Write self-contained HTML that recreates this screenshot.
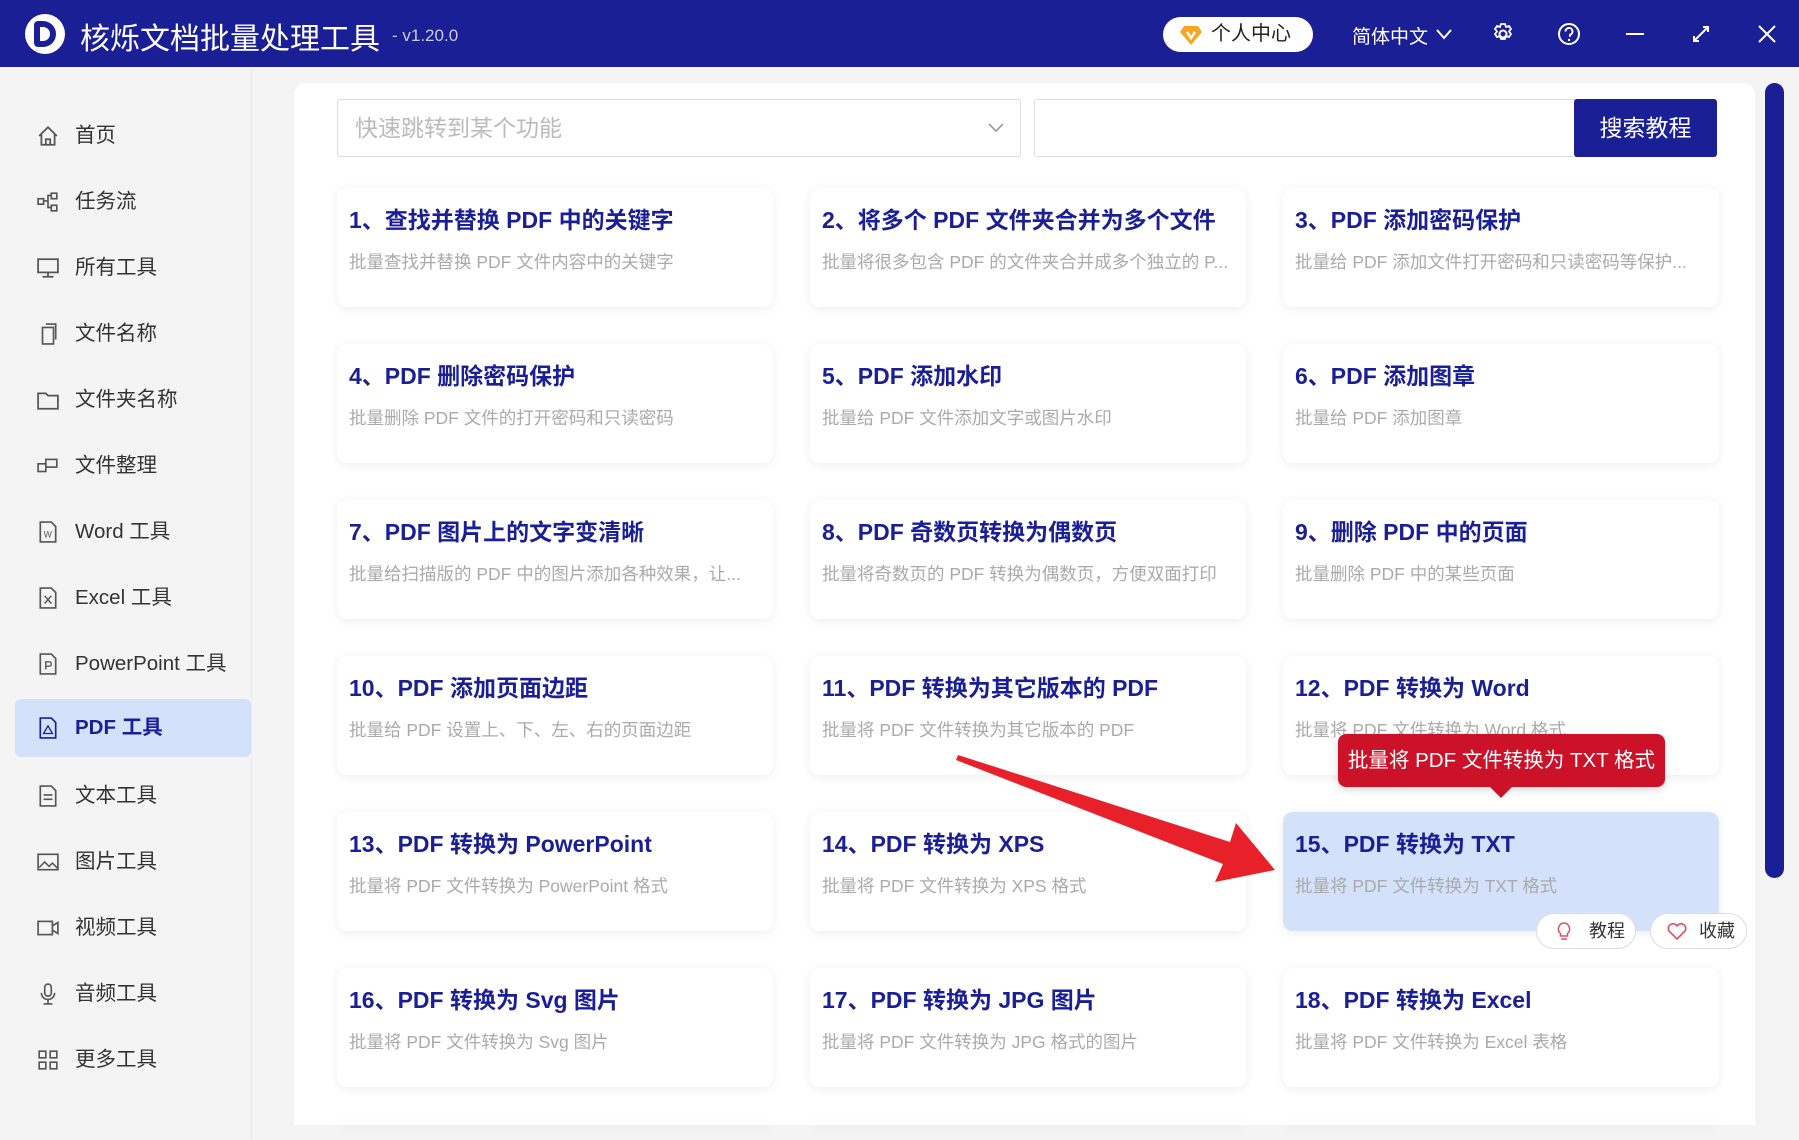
<!DOCTYPE html>
<html><head><meta charset="utf-8"><style>
*{margin:0;padding:0;box-sizing:border-box}
body{width:1799px;height:1140px;overflow:hidden;background:#f4f4f4;font-family:"Liberation Sans","Noto Sans CJK SC",sans-serif;position:relative}
.hdr{position:absolute;left:0;top:0;width:1799px;height:67px;background:#1a1f96;color:#fff}
.abs{position:absolute}
.side{position:absolute;left:0;top:67px;width:252px;height:1073px;background:#f4f4f4;border-right:1px solid #ececec}
.si{position:absolute;left:15px;width:236px;height:58px;font-size:20.5px;color:#333;line-height:58px;padding-left:60px;border-radius:6px}
.si svg{position:absolute;left:22px;top:18px}
.si.act{background:#d4e1fb;color:#1a1f96;font-weight:bold}
.panel{position:absolute;left:294px;top:83px;width:1461px;height:1042px;background:#fff;border-radius:12px 12px 0 0;overflow:hidden}
.card{position:absolute;width:436px;height:119px;background:#fff;border-radius:10px;box-shadow:0 2px 10px rgba(0,0,0,0.07)}
.card h3{position:absolute;left:12px;top:13px;font-size:23px;color:#1a1f96;font-weight:bold;white-space:nowrap}
.card p{position:absolute;left:12px;top:61px;font-size:17.5px;color:#aaa;white-space:nowrap}
.btn{position:absolute;height:36px;background:#fff;border:1px solid #ddd;border-radius:18px;font-size:18px;color:#333;line-height:34px}
</style></head><body>
<div class="hdr">
 <div class="abs" style="left:25px;top:14px;width:40px;height:40px;border-radius:50%;background:#fff;"></div>
 <div class="abs" style="left:34px;top:21px;width:22px;height:26px;border:6px solid #1a1f96;border-radius:4px 13px 13px 4px;"></div>
 <div class="abs" style="left:80px;top:14px;font-size:30px;">核烁文档批量处理工具</div>
 <div class="abs" style="left:392px;top:26px;font-size:17px;color:#ccd;">- v1.20.0</div>
 <div class="abs" style="left:1163px;top:17px;width:150px;height:35px;background:#fff;border-radius:18px;color:#222;font-size:20px;line-height:35px;padding-left:48px;">个人中心</div>
 <svg class="abs" style="left:1180px;top:25px" width="22" height="20" viewBox="0 0 22 20"><path d="M4 1h14l4 6-11 13L0 7z" fill="#f5a623"/><path d="M7 7l4 6 4-6" stroke="#fff" stroke-width="2.5" fill="none"/></svg>
 <div class="abs" style="left:1352px;top:22px;font-size:19px;">简体中文</div>
 <svg class="abs" style="left:1436px;top:28px" width="16" height="12"><path d="M1 2l7 8 7-8" stroke="#fff" stroke-width="2" fill="none"/></svg>
 <svg class="abs" style="left:1491px;top:22px" width="24" height="24" viewBox="0 0 24 24"><circle cx="12" cy="12" r="3.5" stroke="#fff" stroke-width="2" fill="none"/><path d="M10 2h4l1 3 3-1 2 3-2 2.5 2 2.5-2 3-3-1-1 3h-4l-1-3-3 1-2-3 2-2.5-2-2.5 2-3 3 1z" stroke="#fff" stroke-width="1.8" fill="none"/></svg>
 <svg class="abs" style="left:1557px;top:22px" width="24" height="24"><circle cx="12" cy="12" r="10" stroke="#fff" stroke-width="2" fill="none"/><path d="M8.5 9.5a3.5 3.5 0 1 1 4.5 3.3v2" stroke="#fff" stroke-width="2" fill="none"/><circle cx="12" cy="18" r="1.2" fill="#fff"/></svg>
 <div class="abs" style="left:1626px;top:33px;width:18px;height:2px;background:#fff"></div>
 <svg class="abs" style="left:1692px;top:25px" width="18" height="18"><path d="M2 16L16 2M11 2h5v5M2 11v5h5" stroke="#fff" stroke-width="2" fill="none"/></svg>
 <svg class="abs" style="left:1758px;top:25px" width="18" height="18"><path d="M1 1l16 16M17 1L1 17" stroke="#fff" stroke-width="2"/></svg>
</div>
<div class="side">
</div>
<div class="abs" style="left:0;top:69px;width:252px;">
 <div class="si" style="top:38px"><svg width="22" height="22" viewBox="0 0 20 20"><path d="M2 10L10 2l8 8M4 8v10h12V8M8 18v-5h4v5" stroke="#555" stroke-width="1.6" fill="none"/></svg>首页</div>
 <div class="si" style="top:104px"><svg width="22" height="22" viewBox="0 0 20 20"><rect x="1" y="7" width="5" height="5" stroke="#555" fill="none" stroke-width="1.5"/><rect x="13" y="2" width="5" height="5" stroke="#555" fill="none" stroke-width="1.5"/><rect x="13" y="13" width="5" height="5" stroke="#555" fill="none" stroke-width="1.5"/><path d="M6 9h4v-5h3M10 9v6h3" stroke="#555" stroke-width="1.5" fill="none"/></svg>任务流</div>
 <div class="si" style="top:170px"><svg width="22" height="22" viewBox="0 0 20 20"><rect x="1" y="2" width="18" height="12" stroke="#555" fill="none" stroke-width="1.6"/><path d="M10 14v4M5 18h10" stroke="#555" stroke-width="1.6"/></svg>所有工具</div>
 <div class="si" style="top:236px"><svg width="22" height="22" viewBox="0 0 20 20"><path d="M5 4h10v15H5zM8 1h9v14" stroke="#555" stroke-width="1.5" fill="none"/></svg>文件名称</div>
 <div class="si" style="top:302px"><svg width="22" height="22" viewBox="0 0 20 20"><path d="M1 4h7l2 2h9v12H1z" stroke="#555" stroke-width="1.6" fill="none"/></svg>文件夹名称</div>
 <div class="si" style="top:368px"><svg width="22" height="22" viewBox="0 0 20 20"><rect x="1" y="8" width="7" height="7" stroke="#555" fill="none" stroke-width="1.5"/><rect x="8" y="4" width="10" height="7" stroke="#555" fill="none" stroke-width="1.5"/></svg>文件整理</div>
 <div class="si" style="top:434px"><svg width="22" height="22" viewBox="0 0 20 20"><path d="M3 1h10l4 4v14H3z" stroke="#555" stroke-width="1.5" fill="none"/><text x="6" y="15" font-size="8" fill="#555">W</text></svg>Word 工具</div>
 <div class="si" style="top:500px"><svg width="22" height="22" viewBox="0 0 20 20"><path d="M3 1h10l4 4v14H3z" stroke="#555" stroke-width="1.5" fill="none"/><path d="M7 8l6 7M13 8l-6 7" stroke="#555" stroke-width="1.3"/></svg>Excel 工具</div>
 <div class="si" style="top:566px"><svg width="22" height="22" viewBox="0 0 20 20"><path d="M3 1h10l4 4v14H3z" stroke="#555" stroke-width="1.5" fill="none"/><path d="M8 15V8h3a2 2 0 0 1 0 4H8" stroke="#555" stroke-width="1.3" fill="none"/></svg>PowerPoint 工具</div>
 <div class="si act" style="top:630px"><svg width="22" height="22" viewBox="0 0 20 20"><path d="M3 1h10l4 4v14H3z" stroke="#1a1f96" stroke-width="1.5" fill="none"/><path d="M6 15l4-7 4 7z" stroke="#1a1f96" stroke-width="1.2" fill="none"/></svg>PDF 工具</div>
 <div class="si" style="top:698px"><svg width="22" height="22" viewBox="0 0 20 20"><path d="M3 1h10l4 4v14H3zM6 9h8M6 13h8" stroke="#555" stroke-width="1.5" fill="none"/></svg>文本工具</div>
 <div class="si" style="top:764px"><svg width="22" height="22" viewBox="0 0 20 20"><rect x="1" y="3" width="18" height="14" stroke="#555" fill="none" stroke-width="1.5"/><path d="M2 15l5-5 4 4 3-3 5 5" stroke="#555" stroke-width="1.4" fill="none"/></svg>图片工具</div>
 <div class="si" style="top:830px"><svg width="22" height="22" viewBox="0 0 20 20"><rect x="1" y="4" width="13" height="12" stroke="#555" fill="none" stroke-width="1.5"/><path d="M14 8l5-3v10l-5-3" stroke="#555" stroke-width="1.5" fill="none"/></svg>视频工具</div>
 <div class="si" style="top:896px"><svg width="22" height="22" viewBox="0 0 20 20"><rect x="7" y="1" width="6" height="11" rx="3" stroke="#555" fill="none" stroke-width="1.5"/><path d="M4 9a6 6 0 0 0 12 0M10 15v4M6 19h8" stroke="#555" stroke-width="1.5" fill="none"/></svg>音频工具</div>
 <div class="si" style="top:962px"><svg width="22" height="22" viewBox="0 0 20 20"><rect x="2" y="2" width="6" height="6" stroke="#555" fill="none" stroke-width="1.5"/><rect x="12" y="2" width="6" height="6" stroke="#555" fill="none" stroke-width="1.5"/><rect x="2" y="12" width="6" height="6" stroke="#555" fill="none" stroke-width="1.5"/><rect x="12" y="12" width="6" height="6" stroke="#555" fill="none" stroke-width="1.5"/></svg>更多工具</div>
</div>
<div class="panel"></div>
<div class="abs" style="left:1765px;top:83px;width:19px;height:795px;background:#1a1f96;border-radius:10px"></div>
<div class="abs" style="left:337px;top:99px;width:684px;height:58px;border:1px solid #ddd;border-radius:3px;font-size:23px;color:#bbb;line-height:56px;padding-left:17px">快速跳转到某个功能</div>
<svg class="abs" style="left:988px;top:122px" width="16" height="12"><path d="M1 2l7 7 7-7" stroke="#999" stroke-width="1.6" fill="none"/></svg>
<div class="abs" style="left:1034px;top:99px;width:545px;height:58px;border:1px solid #ddd;border-radius:3px"></div>
<div class="abs" style="left:1574px;top:99px;width:143px;height:58px;background:#1a1f96;border-radius:3px;color:#fff;font-size:23px;line-height:58px;text-align:center">搜索教程</div>

<div class="card" style="left:337px;top:188px"><h3>1、查找并替换 PDF 中的关键字</h3><p>批量查找并替换 PDF 文件内容中的关键字</p></div>
<div class="card" style="left:810px;top:188px"><h3>2、将多个 PDF 文件夹合并为多个文件</h3><p>批量将很多包含 PDF 的文件夹合并成多个独立的 P...</p></div>
<div class="card" style="left:1283px;top:188px"><h3>3、PDF 添加密码保护</h3><p>批量给 PDF 添加文件打开密码和只读密码等保护...</p></div>
<div class="card" style="left:337px;top:344px"><h3>4、PDF 删除密码保护</h3><p>批量删除 PDF 文件的打开密码和只读密码</p></div>
<div class="card" style="left:810px;top:344px"><h3>5、PDF 添加水印</h3><p>批量给 PDF 文件添加文字或图片水印</p></div>
<div class="card" style="left:1283px;top:344px"><h3>6、PDF 添加图章</h3><p>批量给 PDF 添加图章</p></div>
<div class="card" style="left:337px;top:500px"><h3>7、PDF 图片上的文字变清晰</h3><p>批量给扫描版的 PDF 中的图片添加各种效果，让...</p></div>
<div class="card" style="left:810px;top:500px"><h3>8、PDF 奇数页转换为偶数页</h3><p>批量将奇数页的 PDF 转换为偶数页，方便双面打印</p></div>
<div class="card" style="left:1283px;top:500px"><h3>9、删除 PDF 中的页面</h3><p>批量删除 PDF 中的某些页面</p></div>
<div class="card" style="left:337px;top:656px"><h3>10、PDF 添加页面边距</h3><p>批量给 PDF 设置上、下、左、右的页面边距</p></div>
<div class="card" style="left:810px;top:656px"><h3>11、PDF 转换为其它版本的 PDF</h3><p>批量将 PDF 文件转换为其它版本的 PDF</p></div>
<div class="card" style="left:1283px;top:656px"><h3>12、PDF 转换为 Word</h3><p>批量将 PDF 文件转换为 Word 格式</p></div>
<div class="card" style="left:337px;top:812px"><h3>13、PDF 转换为 PowerPoint</h3><p>批量将 PDF 文件转换为 PowerPoint 格式</p></div>
<div class="card" style="left:810px;top:812px"><h3>14、PDF 转换为 XPS</h3><p>批量将 PDF 文件转换为 XPS 格式</p></div>
<div class="card" style="left:1283px;top:812px;background:#d3e2fa"><h3>15、PDF 转换为 TXT</h3><p>批量将 PDF 文件转换为 TXT 格式</p></div>
<div class="card" style="left:337px;top:968px"><h3>16、PDF 转换为 Svg 图片</h3><p>批量将 PDF 文件转换为 Svg 图片</p></div>
<div class="card" style="left:810px;top:968px"><h3>17、PDF 转换为 JPG 图片</h3><p>批量将 PDF 文件转换为 JPG 格式的图片</p></div>
<div class="card" style="left:1283px;top:968px"><h3>18、PDF 转换为 Excel</h3><p>批量将 PDF 文件转换为 Excel 表格</p></div>
<div class="card" style="left:337px;top:1122px;height:3px"></div>
<div class="card" style="left:810px;top:1122px;height:3px"></div>
<div class="card" style="left:1283px;top:1122px;height:3px"></div>

<div class="btn" style="left:1536px;top:913px;width:100px;padding-left:52px"><svg class="abs" style="left:20px;top:8px" width="14" height="20"><path d="M7 1a6 6 0 0 0-3.5 10.5V14h7v-2.5A6 6 0 0 0 7 1zM4 17h6" stroke="#e05060" stroke-width="1.5" fill="none"/></svg>教程</div>
<div class="btn" style="left:1650px;top:913px;width:97px;padding-left:48px"><svg class="abs" style="left:16px;top:9px" width="20" height="18"><path d="M10 16L2 8a4 4 0 0 1 8-5 4 4 0 0 1 8 5z" stroke="#e05060" stroke-width="1.6" fill="none"/></svg>收藏</div>

<div class="abs" style="left:1338px;top:734px;width:327px;height:53px;background:#cc1229;border-radius:8px;color:#fff;font-size:20.5px;line-height:53px;text-align:center;box-shadow:0 3px 8px rgba(0,0,0,0.15)">批量将 PDF 文件转换为 TXT 格式</div>
<div class="abs" style="left:1489px;top:786px;width:0;height:0;border-left:12px solid transparent;border-right:12px solid transparent;border-top:12px solid #cc1229"></div>

<svg class="abs" style="left:0;top:0" width="1799" height="1140"><polygon points="958,755 1230,842 1236,823 1275,870 1215,882 1223,864 956,760" fill="#e8202a"/></svg>
</body></html>
